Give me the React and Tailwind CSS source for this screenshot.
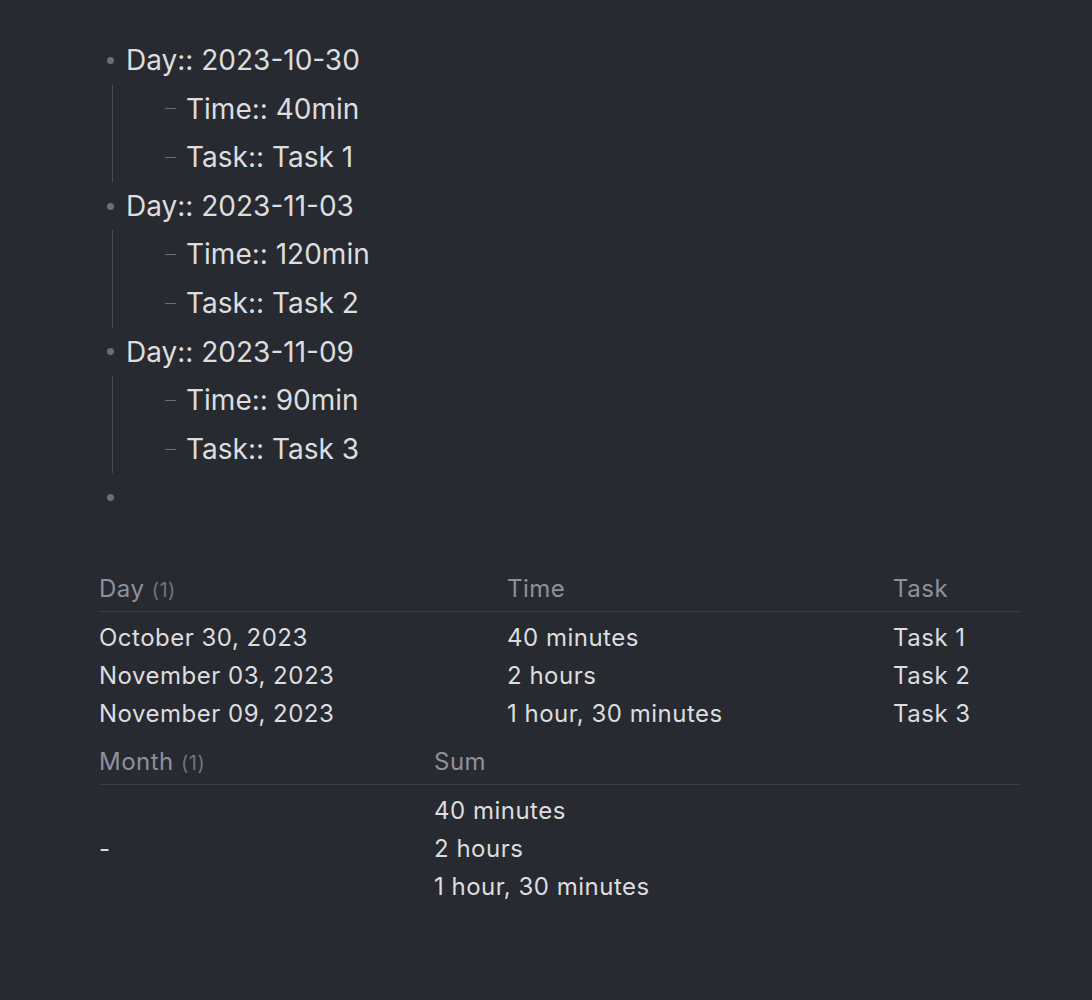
const items = [
  { day: '2023-10-30', time: '40min', task: 'Task 1' },
  { day: '2023-11-03', time: '120min', task: 'Task 2' },
  { day: '2023-11-09', time: '90min', task: 'Task 3' },
]

const rows = [
  ['October 30, 2023', '40 minutes', 'Task 1'],
  ['November 03, 2023', '2 hours', 'Task 2'],
  ['November 09, 2023', '1 hour, 30 minutes', 'Task 3'],
]

function Bullet() {
  return <span className="w-[7px] h-[7px] rounded-full bg-[#6b6d75] mr-[12px] shrink-0" />
}

export default function App() {
  return (
    <div className="min-h-[1000px] bg-[#282a32] text-[#dcddde] pt-[36px] pl-[99px] pr-[72px]" style={{ fontFamily: 'Inter, "Noto Sans", sans-serif' }}>
      <ul className="pl-[8px] text-[28px] leading-[48.6px]">
        {items.map(it => (
          <li key={it.day}>
            <div className="flex items-center">
              <Bullet />
              <span>Day:: {it.day}</span>
            </div>
            <div className="ml-[5px] border-l border-[#4a4c55] pl-[52px]">
              <div className="flex items-center">
                <span className="w-[11px] h-px bg-[#6b6d75] mr-[10px]" />
                <span>Time:: {it.time}</span>
              </div>
              <div className="flex items-center">
                <span className="w-[11px] h-px bg-[#6b6d75] mr-[10px]" />
                <span>Task:: {it.task}</span>
              </div>
            </div>
          </li>
        ))}
        <li className="flex items-center h-[48.6px]"><Bullet /></li>
      </ul>

      <div className="mt-[52px] text-[24px] tracking-[0.5px]">
        <table className="w-[921px] border-collapse">
          <thead>
            <tr className="text-[#8e909c] border-b border-[#3c3e47]">
              <th className="w-[408px] text-left font-normal pb-[6px] leading-[30px]">Day <span className="text-[20px] text-[#70727d]">(1)</span></th>
              <th className="w-[386px] text-left font-normal pb-[6px] leading-[30px]">Time</th>
              <th className="text-left font-normal pb-[6px] leading-[30px]">Task</th>
            </tr>
          </thead>
          <tbody>
            {rows.map((r, i) => (
              <tr key={i} className="leading-[38px]">
                <td className={i === 0 ? 'pt-[7px]' : ''}>{r[0]}</td>
                <td className={i === 0 ? 'pt-[7px]' : ''}>{r[1]}</td>
                <td className={i === 0 ? 'pt-[7px]' : ''}>{r[2]}</td>
              </tr>
            ))}
          </tbody>
        </table>

        <table className="w-[921px] border-collapse mt-[14px]">
          <thead>
            <tr className="text-[#8e909c] border-b border-[#3c3e47]">
              <th className="w-[335px] text-left font-normal pb-[6px] leading-[30px]">Month <span className="text-[20px] text-[#70727d]">(1)</span></th>
              <th className="text-left font-normal pb-[6px] leading-[30px]">Sum</th>
            </tr>
          </thead>
          <tbody>
            <tr className="leading-[38px]">
              <td className="align-middle pt-[7px]">-</td>
              <td className="pt-[7px]">
                <div>40 minutes</div>
                <div>2 hours</div>
                <div>1 hour, 30 minutes</div>
              </td>
            </tr>
          </tbody>
        </table>
      </div>
    </div>
  )
}
